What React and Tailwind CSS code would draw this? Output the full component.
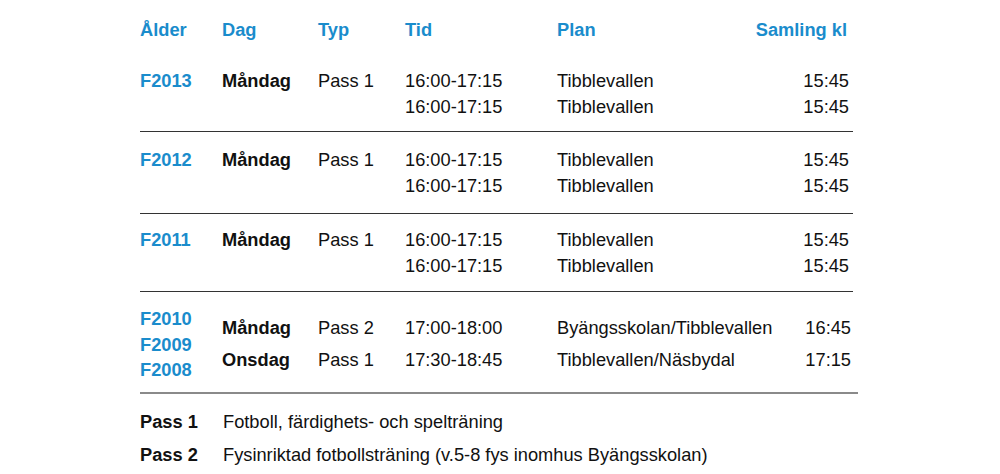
const groups = [
  {
    age: "F2013",
    day: "Måndag",
    typ: "Pass 1",
    lines: [
      { tid: "16:00-17:15", plan: "Tibblevallen", kl: "15:45" },
      { tid: "16:00-17:15", plan: "Tibblevallen", kl: "15:45" },
    ],
    pad: "pt-0 pb-[11px]",
  },
  {
    age: "F2012",
    day: "Måndag",
    typ: "Pass 1",
    lines: [
      { tid: "16:00-17:15", plan: "Tibblevallen", kl: "15:45" },
      { tid: "16:00-17:15", plan: "Tibblevallen", kl: "15:45" },
    ],
    pad: "pt-[15px] pb-[14px]",
  },
  {
    age: "F2011",
    day: "Måndag",
    typ: "Pass 1",
    lines: [
      { tid: "16:00-17:15", plan: "Tibblevallen", kl: "15:45" },
      { tid: "16:00-17:15", plan: "Tibblevallen", kl: "15:45" },
    ],
    pad: "pt-[13px] pb-[12px]",
  },
]

const cols = "grid grid-cols-[82px_96px_87px_152px_1fr_auto]"

export default function App() {
  return (
    <div className="w-[1000px] h-[474px] bg-white font-['Liberation_Sans',Arial,sans-serif] text-[18.25px] text-[#111] overflow-hidden">
      <div className="ml-[140px] w-[713px] pt-[17px]">
        {/* header */}
        <div className={`${cols} leading-[26px] font-bold text-[#1a8ccc] mb-[25px]`}>
          <div>Ålder</div>
          <div>Dag</div>
          <div>Typ</div>
          <div>Tid</div>
          <div>Plan</div>
          <div className="text-right pr-[6px]">Samling kl</div>
        </div>

        {groups.map((g, i) => (
          <div key={i} className={`border-b border-[#333] ${g.pad}`}>
            {g.lines.map((l, j) => (
              <div key={j} className={`${cols} leading-[26px]`}>
                <div className="font-bold text-[#1a8ccc]">{j === 0 ? g.age : ""}</div>
                <div className="font-bold">{j === 0 ? g.day : ""}</div>
                <div>{j === 0 ? g.typ : ""}</div>
                <div>{l.tid}</div>
                <div>{l.plan}</div>
                <div className="text-right pr-[4px]">{l.kl}</div>
              </div>
            ))}
          </div>
        ))}

        {/* combined group */}
        <div className="w-[718px] border-b-2 border-[#8a8a8a] pt-[14px] pb-[9px] flex items-center">
          <div className="w-[82px] shrink-0 flex flex-col font-bold text-[#1a8ccc] leading-[25.5px]">
            <span>F2010</span>
            <span>F2009</span>
            <span>F2008</span>
          </div>
          <div className="flex-1 flex flex-col leading-[32px] pr-[3px]">
            <div className="grid grid-cols-[96px_87px_152px_1fr_auto]">
              <div className="font-bold">Måndag</div>
              <div>Pass 2</div>
              <div>17:00-18:00</div>
              <div>Byängsskolan/Tibblevallen</div>
              <div className="text-right pr-[4px]">16:45</div>
            </div>
            <div className="grid grid-cols-[96px_87px_152px_1fr_auto]">
              <div className="font-bold">Onsdag</div>
              <div>Pass 1</div>
              <div>17:30-18:45</div>
              <div>Tibblevallen/Näsbydal</div>
              <div className="text-right pr-[4px]">17:15</div>
            </div>
          </div>
        </div>

        {/* legend */}
        <div className="pt-[11px] leading-[33px]">
          <div className="flex">
            <span className="w-[83px] font-bold">Pass 1</span>
            <span>Fotboll, färdighets- och spelträning</span>
          </div>
          <div className="flex">
            <span className="w-[83px] font-bold">Pass 2</span>
            <span>Fysinriktad fotbollsträning (v.5-8 fys inomhus Byängsskolan)</span>
          </div>
        </div>
      </div>
    </div>
  )
}
